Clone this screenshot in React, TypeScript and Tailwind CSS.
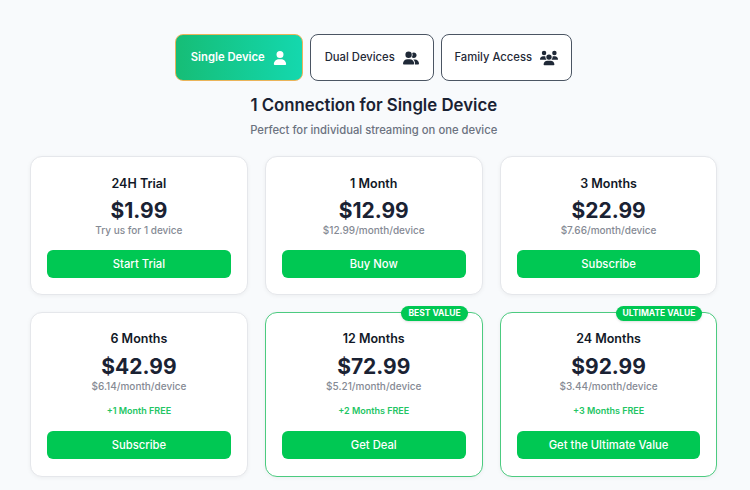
import { FaUser, FaUserGroup, FaUsers } from "react-icons/fa6";

type Plan = {
  name: string;
  price: string;
  note: string;
  cta: string;
  bonus?: string;
  badge?: string;
};

const plans: Plan[] = [
  { name: "24H Trial", price: "$1.99", note: "Try us for 1 device", cta: "Start Trial" },
  { name: "1 Month", price: "$12.99", note: "$12.99/month/device", cta: "Buy Now" },
  { name: "3 Months", price: "$22.99", note: "$7.66/month/device", cta: "Subscribe" },
  { name: "6 Months", price: "$42.99", note: "$6.14/month/device", cta: "Subscribe", bonus: "+1 Month FREE" },
  { name: "12 Months", price: "$72.99", note: "$5.21/month/device", cta: "Get Deal", bonus: "+2 Months FREE", badge: "BEST VALUE" },
  { name: "24 Months", price: "$92.99", note: "$3.44/month/device", cta: "Get the Ultimate Value", bonus: "+3 Months FREE", badge: "ULTIMATE VALUE" },
];

function PlanCard({ plan }: { plan: Plan }) {
  return (
    <div
      className={`relative flex flex-col items-center rounded-xl border bg-white px-4 shadow-[0_1px_4px_rgba(0,0,0,0.05)] ${
        plan.bonus ? "pt-[16px] pb-[17px]" : "pt-[17px] pb-[16px]"
      } ${plan.badge ? "border-[#4ccb80]" : "border-[#e5e7eb]"}`}
    >
      {plan.badge && (
        <span className="absolute -top-[7px] right-[14px] rounded-full bg-[#00c853] px-[7px] py-[1px] text-[8.5px] leading-[13px] font-bold text-white shadow-sm">
          {plan.badge}
        </span>
      )}
      <h3 className="text-[12.5px] leading-5 font-semibold text-[#111827]">{plan.name}</h3>
      <p className={`text-[21px] leading-[27px] font-bold text-[#1a2233] ${plan.bonus ? "mt-[4px]" : "mt-[3px]"}`}>{plan.price}</p>
      <p className="text-[10px] leading-[12px] font-medium text-[#858a94]">{plan.note}</p>
      {plan.bonus && <p className="mt-[12px] text-[9px] leading-[14px] font-semibold text-[#22c563]">{plan.bonus}</p>}
      <button
        className={`h-7 w-full rounded-md bg-[#00c853] text-[11.25px] font-medium text-white ${plan.bonus ? "mt-[13px]" : "mt-[14px]"}`}
      >
        {plan.cta}
      </button>
    </div>
  );
}

export default function App() {
  return (
    <div className="h-[490px] overflow-hidden bg-[#f8fafc] pt-[34px] pr-[32.5px] pl-[30px] font-['Inter',sans-serif]">
      <div className="flex justify-center gap-[7px] pr-[1px]">
        <button className="flex h-[47px] w-[128px] items-center justify-center gap-2 rounded-lg border border-[#eab45a] bg-gradient-to-r from-[#16bd76] to-[#14d8ae] text-[11.25px] font-semibold text-white">
          Single Device
          <FaUser className="h-[14px] w-[14px]" />
        </button>
        <button className="flex h-[47px] w-[124px] items-center justify-center gap-2 rounded-lg border border-[#4b5563] bg-white text-[11.25px] font-[550] text-[#1f2937]">
          Dual Devices
          <FaUserGroup className="h-[16px] w-[16px] text-[#1f2937]" />
        </button>
        <button className="flex h-[47px] w-[131px] items-center justify-center gap-2 rounded-lg border border-[#4b5563] bg-white text-[11.25px] font-[550] text-[#1f2937]">
          Family Access
          <FaUsers className="h-[18px] w-[18px] text-[#1f2937]" />
        </button>
      </div>
      <h2 className="mt-[12px] text-center text-[16.8px] leading-6 font-semibold text-[#1a2233]">1 Connection for Single Device</h2>
      <p className="mt-[4px] text-center text-[11.25px] leading-[18px] font-[550] text-[#6b7280]">Perfect for individual streaming on one device</p>
      <div className="mt-[17px] grid grid-cols-3 gap-x-[17px] gap-y-[17px]">
        {plans.map((plan) => (
          <PlanCard key={plan.name} plan={plan} />
        ))}
      </div>
    </div>
  );
}
